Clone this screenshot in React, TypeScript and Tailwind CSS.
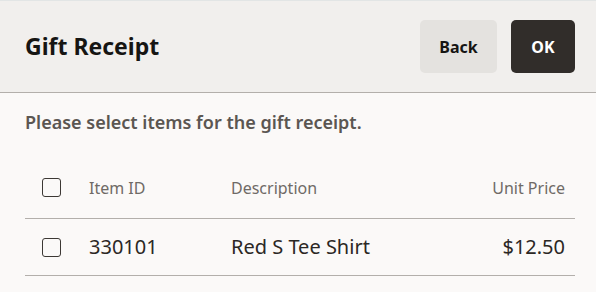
import { useState } from 'react'

const items = [{ id: '330101', description: 'Red S Tee Shirt', price: '$12.50' }]

function Checkbox({ checked, onChange }: { checked: boolean; onChange: () => void }) {
    return (
        <button
            type="button"
            onClick={onChange}
            className="w-[19px] h-[19px] rounded-[3px] border-[1.5px] border-[#3c3834] bg-transparent flex items-center justify-center"
        >
            {checked && (
                <svg viewBox="0 0 16 16" className="w-3 h-3">
                    <path d="M3 8.5l3 3 7-7" fill="none" stroke="#3c3834" strokeWidth="2" />
                </svg>
            )}
        </button>
    )
}

export default function App() {
    const [selected, setSelected] = useState<string[]>([])
    const allChecked = selected.length === items.length

    const toggle = (id: string) =>
        setSelected(s => (s.includes(id) ? s.filter(x => x !== id) : [...s, id]))

    return (
        <div className="w-full h-[292px] bg-[#fbf9f8] font-['Noto_Sans',sans-serif] overflow-hidden">
            {/* header */}
            <div className="border-t border-[#e2e5e5] h-[93px] bg-[#f1efed] border-b border-b-[#b3afab] pl-[25px] pr-[21px] flex items-center justify-between">
                <h1 className="text-[23px] font-bold text-[#161513] leading-none">Gift Receipt</h1>
                <div className="flex items-center gap-[14px]">
                    <button className="h-[53px] w-[77px] rounded-[5px] bg-[#e4e2df] text-[16px] font-bold text-[#161513]">
                        Back
                    </button>
                    <button className="h-[53px] w-[64px] rounded-[5px] bg-[#312d2a] text-[16px] font-bold text-white">
                        OK
                    </button>
                </div>
            </div>

            {/* body */}
            <div className="pl-[25px] pr-[21px]">
                <p className="mt-[17px] text-[18px] leading-6 font-semibold text-[#5b5652]">
                    Please select items for the gift receipt.
                </p>

                <div className="mt-[23px]">
                    <div className="h-[62px] flex items-center border-b border-[#b3afab] text-[16px] text-[#6f6a66]">
                        <div className="w-[64px] pl-[17px] flex items-center">
                            <Checkbox
                                checked={allChecked}
                                onChange={() => setSelected(allChecked ? [] : items.map(i => i.id))}
                            />
                        </div>
                        <div className="w-[142px]">Item ID</div>
                        <div className="flex-1">Description</div>
                        <div className="pr-[10px] text-right">Unit Price</div>
                    </div>
                    {items.map(item => (
                        <div
                            key={item.id}
                            className="h-[57px] flex items-center border-b border-[#b3afab] text-[20px] text-[#2b2724]"
                        >
                            <div className="w-[64px] pl-[17px] flex items-center">
                                <Checkbox checked={selected.includes(item.id)} onChange={() => toggle(item.id)} />
                            </div>
                            <div className="w-[142px]">{item.id}</div>
                            <div className="flex-1">{item.description}</div>
                            <div className="pr-[10px] text-right">{item.price}</div>
                        </div>
                    ))}
                </div>
            </div>
        </div>
    )
}
